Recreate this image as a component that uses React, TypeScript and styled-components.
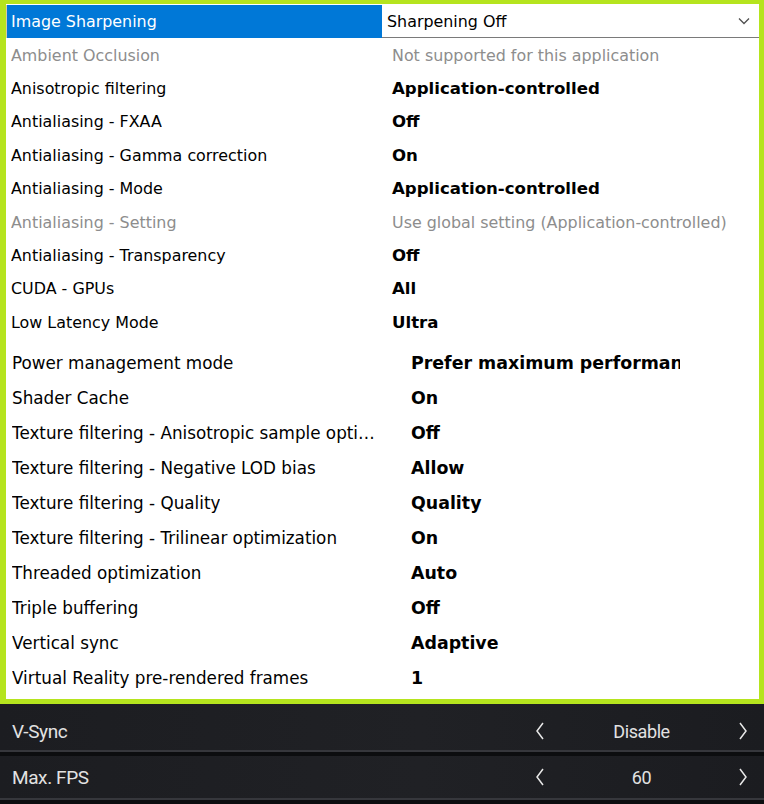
import React from 'react';
import styled, { createGlobalStyle } from 'styled-components';

const GlobalStyle = createGlobalStyle`
  html, body {
    margin: 0;
    padding: 0;
    background: #0c0d0f;
  }
  #root {
    width: 764px;
    height: 804px;
    overflow: hidden;
  }
`;

type Setting = { label: string; value: string; dim?: boolean };

const upperSettings: Setting[] = [
  { label: 'Ambient Occlusion', value: 'Not supported for this application', dim: true },
  { label: 'Anisotropic filtering', value: 'Application-controlled' },
  { label: 'Antialiasing - FXAA', value: 'Off' },
  { label: 'Antialiasing - Gamma correction', value: 'On' },
  { label: 'Antialiasing - Mode', value: 'Application-controlled' },
  { label: 'Antialiasing - Setting', value: 'Use global setting (Application-controlled)', dim: true },
  { label: 'Antialiasing - Transparency', value: 'Off' },
  { label: 'CUDA - GPUs', value: 'All' },
  { label: 'Low Latency Mode', value: 'Ultra' },
];

const lowerSettings: Setting[] = [
  { label: 'Power management mode', value: 'Prefer maximum performance' },
  { label: 'Shader Cache', value: 'On' },
  { label: 'Texture filtering - Anisotropic sample optimization', value: 'Off' },
  { label: 'Texture filtering - Negative LOD bias', value: 'Allow' },
  { label: 'Texture filtering - Quality', value: 'Quality' },
  { label: 'Texture filtering - Trilinear optimization', value: 'On' },
  { label: 'Threaded optimization', value: 'Auto' },
  { label: 'Triple buffering', value: 'Off' },
  { label: 'Vertical sync', value: 'Adaptive' },
  { label: 'Virtual Reality pre-rendered frames', value: '1' },
];

const gameOptions = [
  { label: 'V-Sync', value: 'Disable' },
  { label: 'Max. FPS', value: '60' },
];

const Page = styled.div`
  width: 764px;
  display: flex;
  flex-direction: column;
`;

const Panel = styled.div`
  background: #ffffff;
  border-style: solid;
  border-color: #b5e41e;
  border-width: 4px 5px 5px 6px;
  height: 704px;
  box-sizing: border-box;
  font-family: 'DejaVu Sans', Verdana, sans-serif;
  color: #000;
`;

const UpperList = styled.div`
  display: grid;
  grid-template-columns: 376px 1fr;
  grid-auto-rows: 33.4px;
  margin-top: 1px;
`;

const LowerList = styled.div`
  display: grid;
  grid-template-columns: 376px 298px 1fr;
  grid-auto-rows: 35px;
  margin-top: 6.5px;
`;

const Label = styled.div<{ $dim?: boolean; $lower?: boolean }>`
  display: flex;
  align-items: center;
  padding: 0 2px 0 ${p => (p.$lower ? 6 : 5)}px;
  font-size: ${p => (p.$lower ? 16.8 : 15.9)}px;
  color: ${p => (p.$dim ? '#8d8d8d' : '#000')};
  white-space: nowrap;
  overflow: hidden;
  min-width: 0;

  span {
    overflow: hidden;
    text-overflow: ellipsis;
  }
`;

const Value = styled.div<{ $dim?: boolean; $lower?: boolean }>`
  display: flex;
  align-items: center;
  padding-left: ${p => (p.$lower ? 29 : 10)}px;
  font-size: ${p => (p.$dim ? 15.9 : p.$lower ? 17.4 : 16.6)}px;
  font-weight: ${p => (p.$dim ? 400 : 700)};
  color: ${p => (p.$dim ? '#8d8d8d' : '#000')};
  white-space: nowrap;
  overflow: hidden;
  min-width: 0;
`;

const Spacer = styled.div``;

const SelectedLabel = styled.div`
  display: flex;
  align-items: center;
  padding-left: 4px;
  background: #0078d7;
  border-left: 1px solid #d6c9a8;
  color: #ffffff;
  font-size: 15.9px;
  white-space: nowrap;
`;

const Dropdown = styled.div`
  display: flex;
  align-items: center;
  justify-content: space-between;
  padding: 0 9px 0 5px;
  border-bottom: 1px solid #7a7a7a;
  font-size: 15.9px;
  white-space: nowrap;
`;

const GameBar = styled.div`
  display: flex;
  flex-direction: column;
  background: #0c0d0f;
  height: 100px;
  font-family: Roboto, 'Liberation Sans', sans-serif;
`;

const GameRow = styled.div`
  display: flex;
  align-items: center;
  box-sizing: border-box;
  height: 44px;
  padding-left: 12px;
  background: linear-gradient(90deg, #1c1d21 0%, #202125 55%, #1b1c20 100%);
  border-bottom: 2px solid #36373c;
  margin-bottom: 4px;
  color: #e2e2e2;
  font-size: 19px;
  letter-spacing: -0.4px;

  &:first-child {
    height: 48px;
    padding-top: 8px;
  }
`;

const GameLabel = styled.div`
  flex: 1;
`;

const Stepper = styled.div`
  display: flex;
  align-items: center;
  width: 234px;
`;

const StepValue = styled.div`
  flex: 1;
  text-align: center;
  font-size: 18px;
`;

const Chevron = ({ dir }: { dir: 'left' | 'right' }) => (
  <svg
    width="10"
    height="20"
    viewBox="0 0 10 20"
    style={{ margin: dir === 'left' ? '0 0 0 5px' : '0 16px 0 0' }}
  >
    <polyline
      points={dir === 'left' ? '8,2 2,10 8,18' : '2,2 8,10 2,18'}
      fill="none"
      stroke="#e8e8e8"
      strokeWidth="1.5"
    />
  </svg>
);

const DropArrow = () => (
  <svg width="12" height="8" viewBox="0 0 12 8">
    <polyline points="1,1.5 6,6.5 11,1.5" fill="none" stroke="#505050" strokeWidth="1.3" />
  </svg>
);

export default function App() {
  return (
    <Page>
      <GlobalStyle />
      <Panel>
        <UpperList>
          <SelectedLabel>Image Sharpening</SelectedLabel>
          <Dropdown>
            <span>Sharpening Off</span>
            <DropArrow />
          </Dropdown>
          {upperSettings.map(s => (
            <React.Fragment key={s.label}>
              <Label $dim={s.dim}>
                <span>{s.label}</span>
              </Label>
              <Value $dim={s.dim}>{s.value}</Value>
            </React.Fragment>
          ))}
        </UpperList>
        <LowerList>
          {lowerSettings.map(s => (
            <React.Fragment key={s.label}>
              <Label $lower>
                <span>{s.label}</span>
              </Label>
              <Value $lower>{s.value}</Value>
              <Spacer />
            </React.Fragment>
          ))}
        </LowerList>
      </Panel>
      <GameBar>
        {gameOptions.map(o => (
          <GameRow key={o.label}>
            <GameLabel>{o.label}</GameLabel>
            <Stepper>
              <Chevron dir="left" />
              <StepValue>{o.value}</StepValue>
              <Chevron dir="right" />
            </Stepper>
          </GameRow>
        ))}
      </GameBar>
    </Page>
  );
}
